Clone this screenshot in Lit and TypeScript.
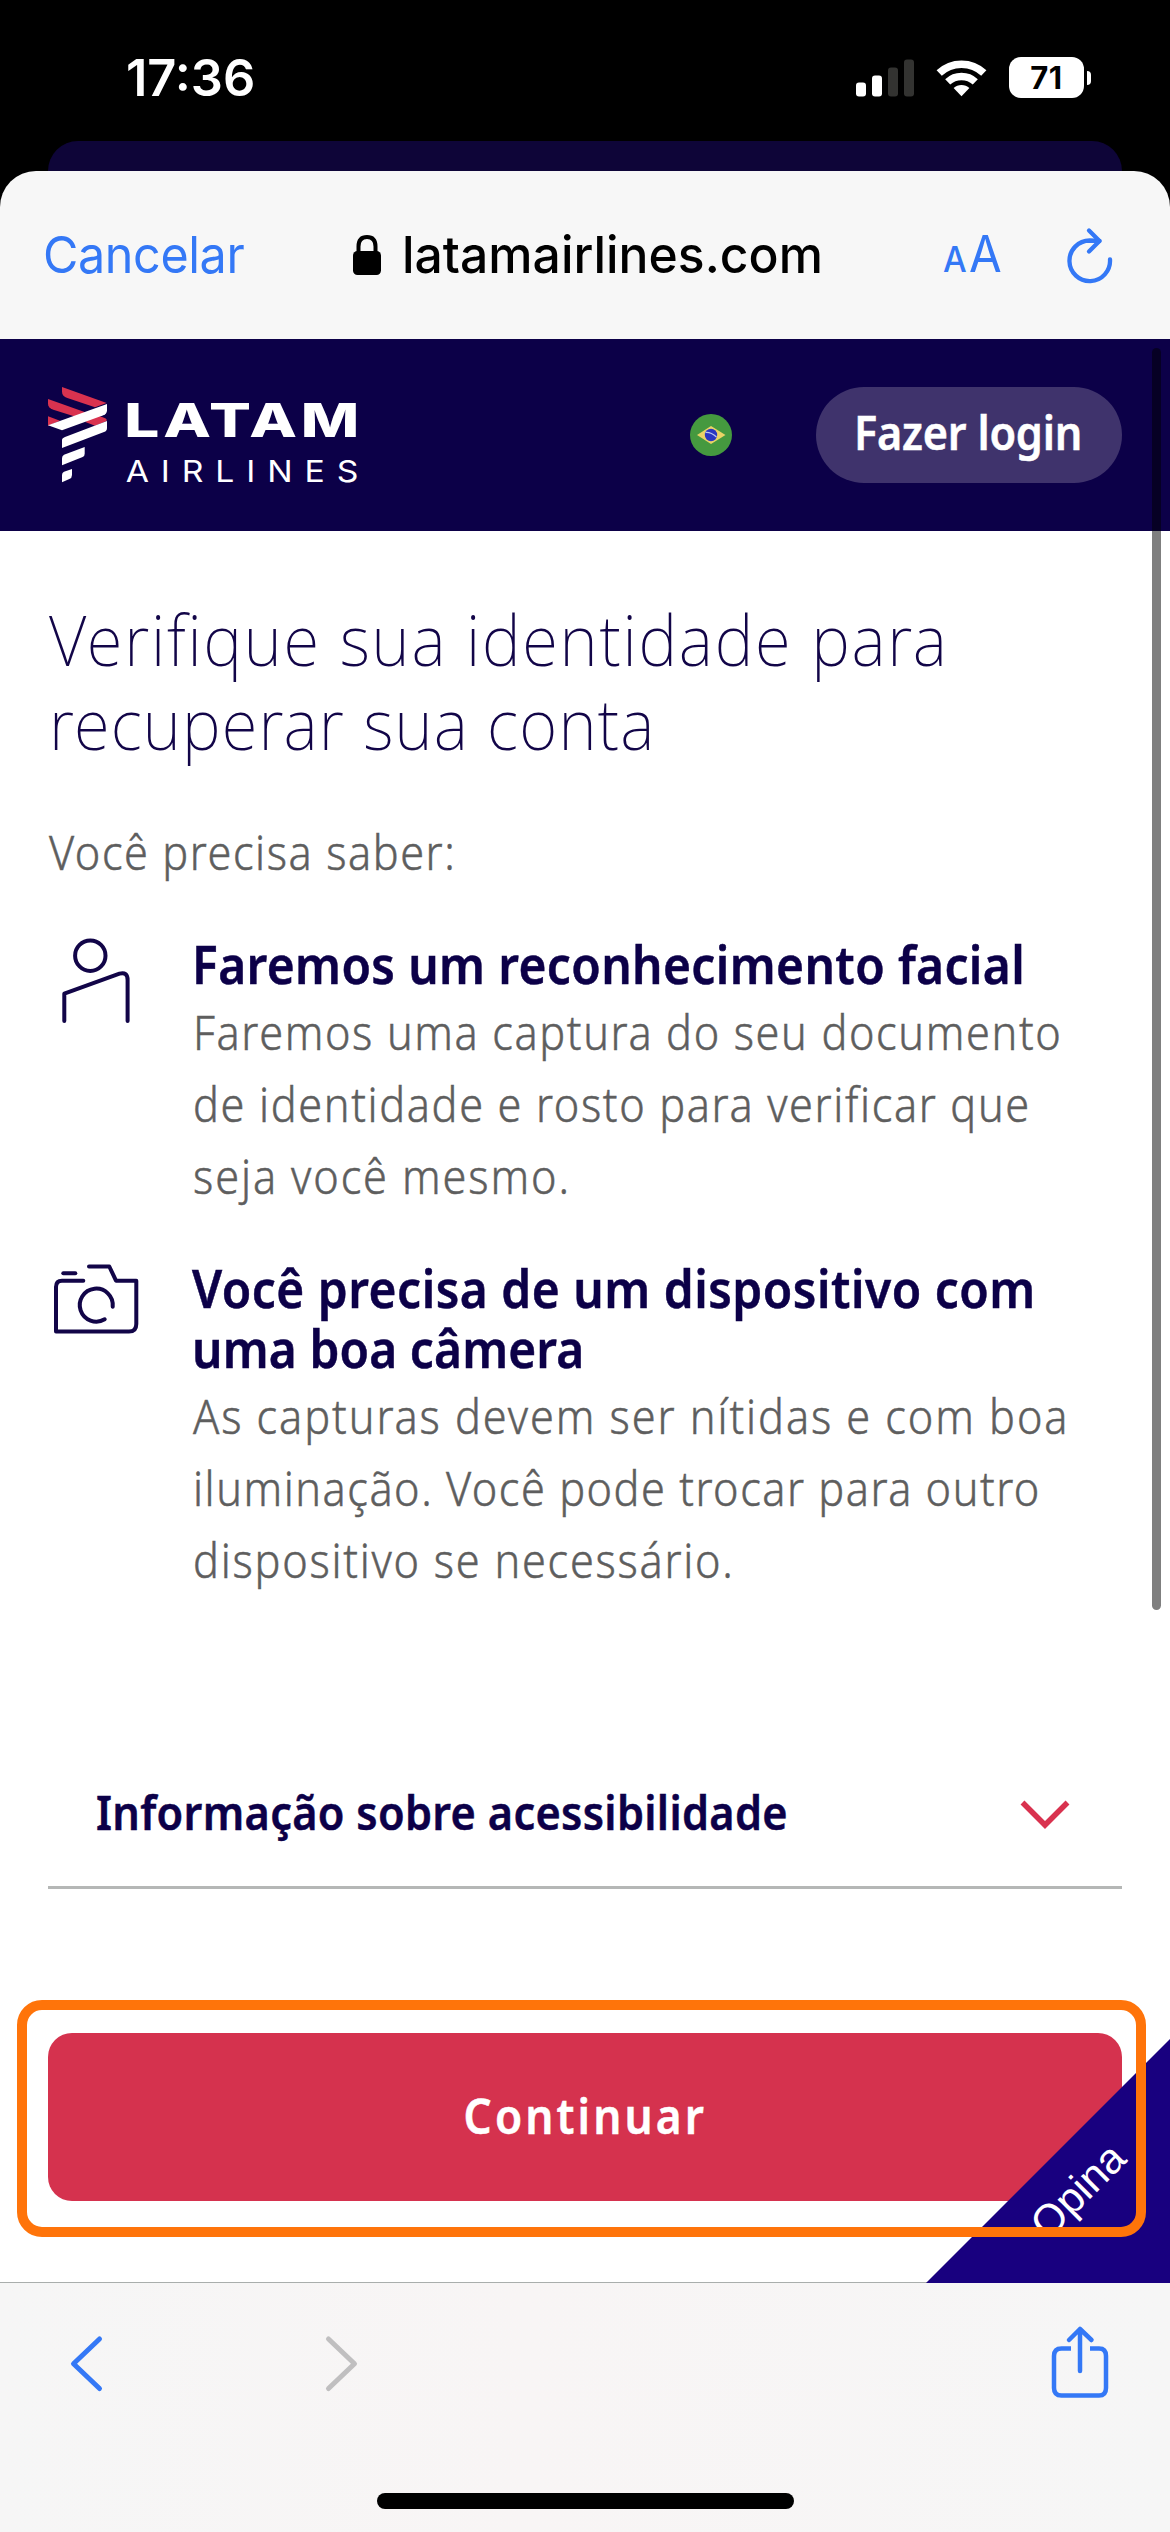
import { LitElement, html, css, svg } from "lit";
import { customElement } from "lit/decorators.js";

// A line of copy together with its tracking in pixels.
type Line = [text: string, tracking: number];

interface Requirement {
  icon: unknown;
  title: Line[];
  body: Line[];
}

const personIcon = svg`
  <svg class="item-icon" width="96" height="92" viewBox="48 934 96 92">
    <circle cx="90.3" cy="955.7" r="15.2" />
    <path d="M64.3 1021V993.7L119.5 973.6Q127.6 971.4 127.6 980V1021" />
  </svg>`;

const cameraIcon = svg`
  <svg class="item-icon" width="96" height="80" viewBox="48 1258 96 80">
    <path d="M63.3 1273.3H75.3" />
    <path d="M83.3 1280.7H62Q56 1280.7 56 1287V1331.6H129Q136.3 1331.6 136.3 1324V1280.7H116L109.3 1266.5H89" />
    <path d="M112.7 1306.7A16.5 16.5 0 1 0 104.7 1319.3" />
  </svg>`;

const requirements: Requirement[] = [
  {
    icon: personIcon,
    title: [["Faremos um reconhecimento facial", 0.43]],
    body: [
      ["Faremos uma captura do seu documento", 1.78],
      ["de identidade e rosto para verificar que", 1.79],
      ["seja você mesmo.", 2.05],
    ],
  },
  {
    icon: cameraIcon,
    title: [
      ["Você precisa de um dispositivo com", 0.57],
      ["uma boa câmera", 0.15],
    ],
    body: [
      ["As capturas devem ser nítidas e com boa", 2.1],
      ["iluminação. Você pode trocar para outro", 1.66],
      ["dispositivo se necessário.", 1.9],
    ],
  },
];

const lines = (items: Line[]) =>
  items.map(([text, tracking]) => html`<span class="line" style="letter-spacing:${tracking}px">${text}</span>`);

@customElement("app-root")
export class AppRoot extends LitElement {
  static styles = css`
    :host {
      display: block;
      width: 1170px;
      height: 2532px;
      background: #000;
      overflow: hidden;
      font-family: "Noto Sans", "Open Sans", sans-serif;
    }
    * { box-sizing: border-box; }
    h1, h2, p { margin: 0; font-weight: inherit; }
    button { border: 0; margin: 0; font-family: inherit; }
    svg { display: block; flex: none; }
    .screen { position: relative; height: 2532px; display: flex; flex-direction: column; }

    .status {
      height: 141px;
      display: flex;
      align-items: center;
      padding: 14px 79px 0 126px;
      color: #fff;
      font-family: Inter, "Liberation Sans", sans-serif;
      flex: none;
    }
    .time { font-size: 50.5px; font-weight: 600; margin-right: auto; }
    .signals { display: flex; align-items: center; gap: 22px; }
    .battery { display: flex; align-items: center; gap: 3px; }
    .level {
      width: 75px; height: 41px; border-radius: 12px; background: #fff; color: #000;
      font-size: 31px; font-weight: 700; line-height: 42px; text-align: center; letter-spacing: 0.5px;
    }
    .nub { width: 4px; height: 14px; border-radius: 0 6px 6px 0; background: #fff; }

    .behind { height: 30px; margin: 0 48px; background: #0e0538; border-radius: 30px 30px 0 0; flex: none; }

    .address {
      height: 168px;
      flex: none;
      background: #f7f7f7;
      border-radius: 36px 36px 0 0;
      display: flex;
      align-items: center;
      padding: 0 56px 0 43px;
      color: #3478f6;
      font: 400 51px/62px Inter, "Liberation Sans", sans-serif;
    }
    .cancel { width: 310px; }
    .fit { display: inline-block; transform-origin: 0 50%; white-space: nowrap; }
    .cancel .fit { transform: scaleX(0.95); letter-spacing: -0.4px; }
    .host { width: 590px; display: flex; align-items: center; gap: 21px; color: #000; font-weight: 500; }
    .host .fit { transform: scaleX(0.977); }
    .reader { width: 124px; display: flex; align-items: baseline; gap: 0; font-size: 51px; padding-top: 3px; }
    .reader .fit { transform: scaleX(0.93); }
    .reader .small { font-size: 36px; font-weight: 500; }

    header {
      height: 192px;
      flex: none;
      background: #0c0048;
      display: flex;
      align-items: center;
      padding: 0 48px;
    }
    .logo { margin-right: auto; overflow: visible; }
    .login {
      width: 306px; height: 96px; border-radius: 48px; margin-left: 84px;
      padding: 0 0 6px 38px; text-align: left;
      background: #3f336c; color: #fff; font-size: 47px; font-weight: 600;
    }
    .line { display: block; width: max-content; white-space: nowrap; transform: scaleX(0.92); transform-origin: 0 50%; }
    .login, h2, .accordion, .primary, .lead, .body { -webkit-text-stroke: 0.5px currentColor; }

    main { flex: 1; background: #fff; padding: 66px 48px 0; }
    h1 { font-size: 71px; line-height: 84px; font-weight: 200; color: #120548; padding-left: 1px; }
    .lead { margin-top: 51px; padding-left: 1px; font-size: 47px; line-height: 72px; font-weight: 300; color: #5e5e5e; }
    .item { display: grid; grid-template-columns: 144px 1fr; margin-top: 46px; }
    .item-icon { fill: none; stroke: #120548; stroke-width: 4; stroke-linecap: round; stroke-linejoin: round; }
    h2 { font-size: 52px; line-height: 60px; font-weight: 600; color: #0c0048; }
    .body { margin-top: 2px; font-size: 47px; line-height: 72px; font-weight: 300; color: #5e5e5e; margin-left: 1px; }
    .accordion {
      margin-top: 140px; height: 153px; border-bottom: 3px solid #b5b7b6;
      display: flex; align-items: center; justify-content: space-between;
      padding: 1px 52px 0 48px; font-size: 47px; line-height: 72px; font-weight: 600; color: #0c0048;
    }
    .accordion svg { margin-top: 4px; }
    .primary {
      display: flex; align-items: center; justify-content: center;
      width: 1074px; height: 168px; margin-top: 144px; border-radius: 24px;
      padding: 0 0 4px; background: #d5324e; color: #fff; font-size: 48px; font-weight: 600;
    }
    .primary .line { transform-origin: 50% 50%; }

    .toolbar {
      height: 250px; flex: none; background: linear-gradient(90deg, #f6f6f6, #f8f5f5 45%, #f6f6f6);
      border-top: 1px solid #a9aeac; padding-top: 40px;
    }
    .actions { display: flex; padding: 0 60px 0 69px; }
    .actions svg { fill: none; stroke: #3478f6; stroke-width: 5; stroke-linecap: round; stroke-linejoin: round; }
    .actions .forward { stroke: #c0bfc0; margin-left: 218px; }
    .actions .share { margin-left: auto; stroke-width: 4.5; }
    .home { width: 417px; height: 16px; border-radius: 8px; background: #000; margin: 90px auto 0; }

    .scroll { position: absolute; left: 1152px; top: 348px; width: 9px; height: 1262px; border-radius: 5px; background: rgba(0, 0, 0, 0.5); }
    .feedback { position: absolute; right: 0; top: 2039px; }
    .focus { position: absolute; left: 17px; top: 2000px; width: 1129px; height: 237px; border: 10px solid #ff740a; border-radius: 25px; }
  `;

  private renderStatus() {
    return html`
      <div class="status">
        <span class="time">17:36</span>
        <div class="signals">
          <svg width="58" height="38" viewBox="856 58.5 58 38">
            <g fill="#fff">
              <rect x="856" y="82" width="10" height="14" rx="3" />
              <rect x="872" y="75" width="10" height="21" rx="3" />
            </g>
            <g fill="#333331">
              <rect x="888" y="67" width="10" height="29" rx="3" />
              <rect x="904" y="59" width="10" height="37" rx="3" />
            </g>
          </svg>
          <svg width="51" height="38" viewBox="936 58.5 51 38">
            <g fill="none" stroke="#fff">
              <path d="M939.2 72.6A32.6 32.6 0 0 1 983.8 72.6" stroke-width="7.6" />
              <path d="M947.7 81.4A20.2 20.2 0 0 1 975.3 81.4" stroke-width="7.4" />
            </g>
            <path d="M953.6 87.6A11.4 11.4 0 0 1 969.4 87.6L961.5 95.7Z" fill="#fff" />
          </svg>
          <div class="battery"><div class="level">71</div><div class="nub"></div></div>
        </div>
      </div>`;
  }

  private renderAddress() {
    return html`
      <div class="address">
        <div class="cancel"><span class="fit">Cancelar</span></div>
        <div class="host">
          <svg width="28" height="40" viewBox="0 0 28 40">
            <rect x="0" y="16" width="28" height="24" rx="4.5" />
            <path d="M5.5 18V11.5Q5.5 2 14 2T22.5 11.5V18" fill="none" stroke="#000" stroke-width="4" />
          </svg>
          <span class="fit">latamairlines.com</span>
        </div>
        <div class="reader"><span class="fit small">A</span><span class="fit">A</span></div>
        <svg width="46" height="58" viewBox="1067 226 46 58" fill="none" stroke="#3478f6" stroke-width="4.3" stroke-linecap="round" stroke-linejoin="round">
          <path d="M1110 259.5A20.3 20.3 0 1 1 1089.7 240.5L1099.5 241" />
          <path d="M1089 230.5L1099.5 241L1089 251.5" />
        </svg>
      </div>`;
  }

  private renderHeader() {
    return html`
      <header>
        <svg class="logo" width="312" height="100" viewBox="24 30 936 300">
          <g fill="#d9324f">
            <path d="M66 36L200 84L165 97L82 69Q66 63 66 50Z" />
            <path d="M24 72L140 113L107 125L40 104Q24 98 24 86Z" />
            <path d="M24 124L60 137L24 152Z" />
            <path d="M170 120L196 130Q201 132 200 138L165 152L136 141Z" />
          </g>
          <g fill="#fff">
            <path d="M201 87V106Q201 117 190 121L66 166L24 151Z" />
            <path d="M201 138V159Q201 168 192 171L66 219V194Q66 189 75 186Z" />
            <path d="M134 216V236Q134 243 128 246L66 271V250Q66 242 72 239Z" />
            <path d="M96 282V300Q96 309 88 312L66 322V300Q66 293 72 290Z" />
            <g font-family="Inter, 'Liberation Sans', sans-serif">
              <text transform="translate(253 187) scale(1.33 1)" font-size="140" font-weight="800" textLength="530">LATAM</text>
              <text transform="translate(257 321) scale(1.15 1)" font-size="88" font-weight="400" textLength="607">AIRLINES</text>
            </g>
          </g>
        </svg>
        <svg width="42" height="42" viewBox="0 0 42 42">
          <circle cx="21" cy="21" r="21" fill="#45993f" />
          <path d="M7 21L21 12L35.5 21L21 30Z" fill="#ead366" />
          <circle cx="21" cy="21" r="6.2" fill="#2a37c2" />
          <path d="M15.5 18.5Q21 18 26.5 23" fill="none" stroke="#b9c4ee" stroke-width="1.3" />
        </svg>
        <button class="login">${lines([["Fazer login", -0.25]])}</button>
      </header>`;
  }

  private renderMain() {
    return html`
      <main>
        <h1>${lines([["Verifique sua identidade para", 1.93], ["recuperar sua conta", 1.3]])}</h1>
        <p class="lead">${lines([["Você precisa saber:", 1.7]])}</p>
        ${requirements.map(
          (r) => html`
            <section class="item">
              ${r.icon}
              <div>
                <h2>${lines(r.title)}</h2>
                <p class="body">${lines(r.body)}</p>
              </div>
            </section>`
        )}
        <div class="accordion">
          ${lines([["Informação sobre acessibilidade", 0.35]])}
          <svg width="50" height="32" viewBox="0 0 50 32"><path d="M2.5 4.5L25 27L47.5 4.5" fill="none" stroke="#d9324f" stroke-width="5.5" /></svg>
        </div>
        <button class="primary">${lines([["Continuar", 3.4]])}</button>
      </main>`;
  }

  private renderToolbar() {
    return html`
      <div class="toolbar">
        <div class="actions">
          <svg width="36" height="80" viewBox="69 2323 36 80"><path d="M99.5 2339L73.5 2363.7L99.5 2388.5" /></svg>
          <svg class="forward" width="36" height="80" viewBox="323 2323 36 80"><path d="M328.5 2339L354.5 2363.7L328.5 2388.5" /></svg>
          <svg class="share" width="60" height="80" viewBox="1050 2323 60 80">
            <path d="M1080 2371V2329M1069 2340L1080 2329L1091.5 2340" />
            <path stroke-linecap="butt" d="M1071 2348.5H1061.5Q1054 2348.5 1054 2356V2388Q1054 2395.5 1061.5 2395.5H1099Q1106 2395.5 1106 2388V2356Q1106 2348.5 1099 2348.5H1090" />
          </svg>
        </div>
        <div class="home"></div>
      </div>`;
  }

  render() {
    return html`
      <div class="screen">
        ${this.renderStatus()}
        <div class="behind"></div>
        ${this.renderAddress()} ${this.renderHeader()} ${this.renderMain()} ${this.renderToolbar()}
        <div class="scroll"></div>
        <svg class="feedback" width="244" height="244" viewBox="0 0 244 244">
          <path d="M244 0V244H0Z" fill="#18007f" />
          <text transform="translate(122 202) rotate(-45)" font-family="'Liberation Sans', sans-serif" font-size="42.5" fill="#fff">Opina</text>
        </svg>
        <div class="focus"></div>
      </div>`;
  }
}
